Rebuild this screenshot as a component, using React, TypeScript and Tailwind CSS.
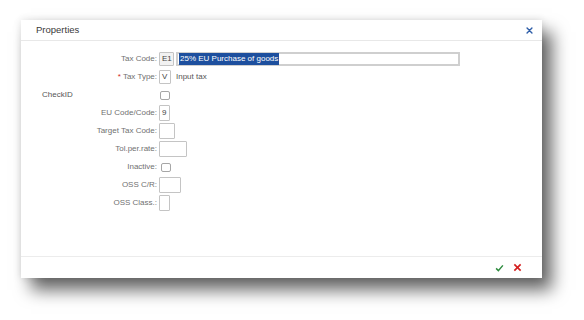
import React from 'react';

const Label: React.FC<{ text: string; required?: boolean }> = ({ text, required }) => (
  <div className="w-[138px] shrink-0 pr-[2px] text-right text-[#707070]">
    {required && <span className="mr-[2px] text-[#d0271d]">*</span>}
    {text}
  </div>
);

const Box: React.FC<{ w: string; h?: string; value?: string; gray?: boolean }> = ({ w, h = 'h-[16px]', value, gray }) => (
  <div
    className={`${w} ${h} flex items-center rounded-[1px] border border-[#c4c4c4] pl-[2px] text-[#444] ${
      gray ? 'bg-[#f2f2f2]' : 'bg-white'
    }`}
  >
    {value}
  </div>
);

const Check: React.FC = () => (
  <div className="ml-[1px] h-[9px] w-[10px] rounded-[2px] border border-[#a6a6a6] bg-white" />
);

const Row: React.FC<{ children: React.ReactNode }> = ({ children }) => (
  <div className="flex h-[18px] items-center">{children}</div>
);

const App: React.FC = () => {
  return (
    <div
      className="h-[320px] w-[584px] overflow-hidden bg-white pl-[21px] pt-[20px] text-[8px]"
      style={{ fontFamily: '"Liberation Sans", Arial, sans-serif' }}
    >
      <div className="flex h-[258px] w-[521px] flex-col bg-white shadow-[10px_12px_16px_rgba(0,0,0,0.6),0_0_8px_rgba(0,0,0,0.12)]">
        <div className="flex h-[21px] shrink-0 items-center justify-between border-b border-[#e8e8e8] pl-[15px] pr-[9px]">
          <span className="text-[9.5px] text-[#3a3a3a]">Properties</span>
          <svg width="7" height="7" viewBox="0 0 10 10" className="text-[#2f5ea8]">
            <path d="M1.5 1.5 L8.5 8.5 M8.5 1.5 L1.5 8.5" stroke="currentColor" strokeWidth="2" strokeLinecap="round" />
          </svg>
        </div>

        <div className="flex-1 pt-[9px]">
          <Row>
            <Label text="Tax Code:" />
            <Box w="w-[15px]" h="h-[14px]" value="E1" gray />
            <div className="ml-[2px] flex h-[14px] w-[284px] items-center border-2 border-[#cfcfcf] bg-white pl-[1px]">
              <span className="bg-[#1d4f9e] px-[1px] text-white">25% EU Purchase of goods</span>
            </div>
          </Row>
          <Row>
            <Label text="Tax Type:" required />
            <Box w="w-[12px]" h="h-[14px]" value="V" />
            <span className="ml-[5px] text-[#555]">Input tax</span>
          </Row>
          <Row>
            <div className="w-[138px] shrink-0 pl-[21px] text-[#555]">CheckID</div>
            <Check />
          </Row>
          <Row>
            <Label text="EU Code/Code:" />
            <Box w="w-[11px]" value="9" />
          </Row>
          <Row>
            <Label text="Target Tax Code:" />
            <Box w="w-[16px]" />
          </Row>
          <Row>
            <Label text="Tol.per.rate:" />
            <Box w="w-[28px]" />
          </Row>
          <Row>
            <Label text="Inactive:" />
            <div className="ml-[1px]">
              <Check />
            </div>
          </Row>
          <Row>
            <Label text="OSS C/R:" />
            <Box w="w-[22px]" />
          </Row>
          <Row>
            <Label text="OSS Class.:" />
            <Box w="w-[11px]" />
          </Row>
        </div>

        <div className="flex h-[22px] shrink-0 items-center justify-end gap-[9px] border-t border-[#ececec] pr-[20px]">
          <svg width="9" height="8" viewBox="0 0 12 10">
            <path d="M1.5 5.5 L4.5 8.5 L10.5 1.5" fill="none" stroke="#2e8b3e" strokeWidth="2" />
          </svg>
          <svg width="9" height="9" viewBox="0 0 10 10">
            <path d="M1.5 1.5 L8.5 8.5 M8.5 1.5 L1.5 8.5" stroke="#d41f1f" strokeWidth="1.8" />
          </svg>
        </div>
      </div>
    </div>
  );
};

export default App;
